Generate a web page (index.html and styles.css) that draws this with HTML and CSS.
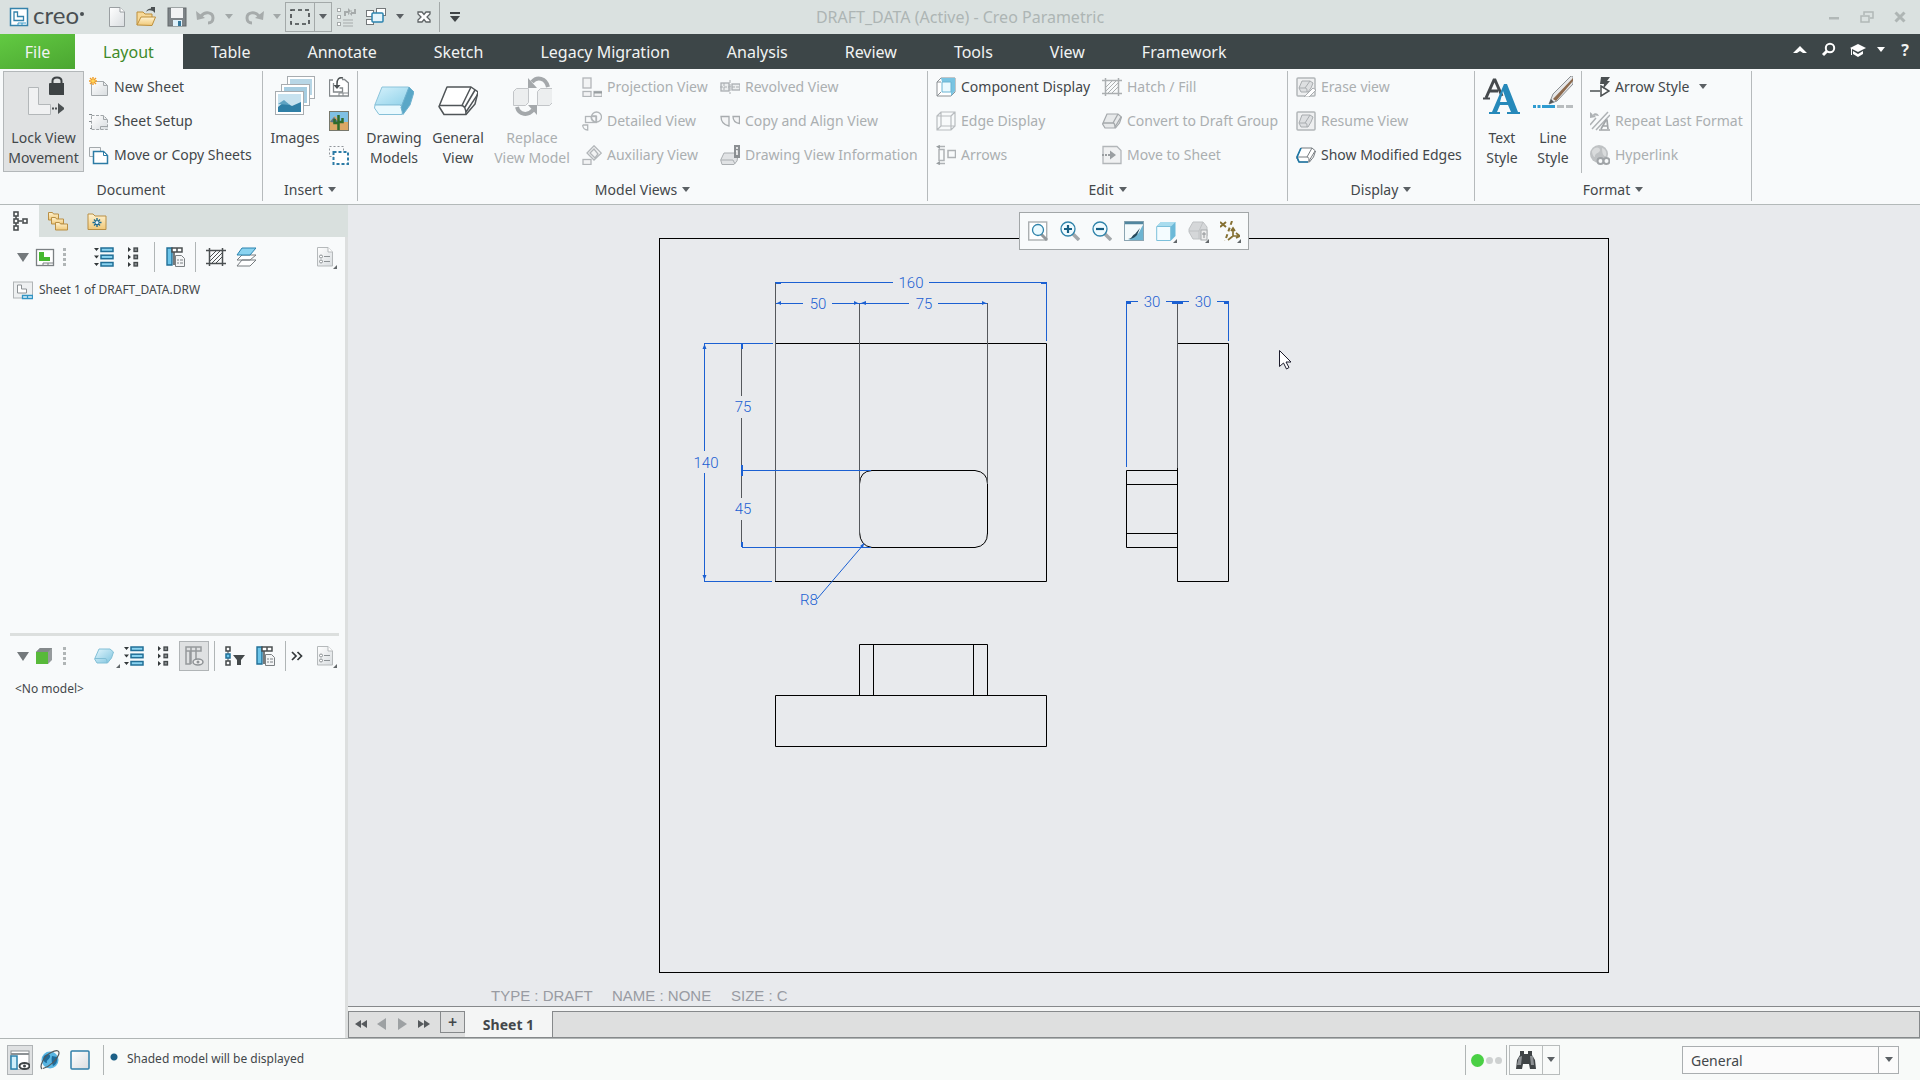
FILE: index.html
```html
<!DOCTYPE html>
<html lang="en">
<head>
<meta charset="utf-8">
<title>DRAFT_DATA (Active) - Creo Parametric</title>
<link rel="stylesheet" href="styles.css">
</head>
<body>
<svg class="defs" aria-hidden="true">
  <defs>
    <linearGradient id="gPage" x1="0" y1="0" x2="1" y2="1"><stop offset="0" stop-color="#fff"/><stop offset="1" stop-color="#d9dde0"/></linearGradient>
    <linearGradient id="gBlue" x1="0" y1="0" x2="1" y2="1"><stop offset="0" stop-color="#e3f6fd"/><stop offset="1" stop-color="#7cc3de"/></linearGradient>
    <linearGradient id="gTop" x1="0" y1="0" x2="1" y2="1"><stop offset="0" stop-color="#d5f1fb"/><stop offset="1" stop-color="#8fd2ea"/></linearGradient>
    <linearGradient id="gFolder" x1="0" y1="0" x2="0" y2="1"><stop offset="0" stop-color="#fff3d2"/><stop offset="1" stop-color="#f0c878"/></linearGradient>
    <symbol id="down" viewBox="0 0 8 6"><path d="M0 0h8L4 5z" fill="#5b6064"/></symbol>
    <symbol id="downL" viewBox="0 0 8 6"><path d="M0 0h8L4 5z" fill="#a2a8a8"/></symbol>
    <symbol id="logo" viewBox="0 0 20 20"><rect x="1.500" y="1.500" width="17" height="17" fill="#fff" stroke="#3583ab" stroke-width="1.500"/><path d="M5 5h3.500v4.500h6v4H5z" fill="none" stroke="#3583ab" stroke-width="1.300"/><path d="M9 18v-2h8M13 16v2" stroke="#3a9bc9" fill="none"/></symbol>
    <symbol id="new" viewBox="0 0 20 20"><path d="M2.500.5H13l4.500 4.500v14.500h-15z" fill="url(#gPage)" stroke="#9a9fa2"/><path d="M13 .5V5h4.500" fill="#fff" stroke="#9a9fa2"/></symbol>
    <symbol id="open" viewBox="0 0 20 20"><path d="M1 18V5h6l2 2h7v3" fill="#f7d998" stroke="#bd8f3c"/><path d="M1 18l4-8h14.500L16 18.500z" fill="url(#gFolder)" stroke="#bd8f3c"/><path d="M10 5c1-3 3-3.500 5-3.500V0l4 0v6L17 4c-3-1-5-1-7 1z" fill="#4b5052"/></symbol>
    <symbol id="save" viewBox="0 0 20 20"><rect x="1" y="1" width="18" height="18" fill="#7e8488" stroke="#63686b"/><rect x="4" y="1" width="12" height="10" fill="#f2f3f4"/><rect x="6" y="13" width="9" height="6" fill="#dff1fa"/><rect x="11" y="14" width="3" height="5" fill="#35789c"/></symbol>
    <symbol id="undo" viewBox="0 0 20 20"><path d="M5 9c4-5 12-4 12 2 0 3-2 5-5 5" fill="none" stroke="#a6abab" stroke-width="3"/><path d="M0 4l1 9 8-2z" fill="#a6abab"/></symbol>
    <symbol id="redo" viewBox="0 0 20 20"><path d="M15 9C11 4 3 5 3 11c0 3 2 5 5 5" fill="none" stroke="#a6abab" stroke-width="3"/><path d="M20 4l-1 9-8-2z" fill="#a6abab"/></symbol>
    <symbol id="selbox" viewBox="0 0 20 20"><rect x="1" y="3" width="18" height="14" fill="none" stroke="#3f4446" stroke-width="1.600" stroke-dasharray="4 3"/></symbol>
    <symbol id="regen" viewBox="0 0 20 20"><g fill="#fff" stroke="#a6abab"><rect x="1.500" y="1.500" width="3" height="3"/><rect x="1.500" y="8.500" width="3" height="3"/><rect x="1.500" y="15.500" width="3" height="3"/></g><path d="M7 13h10M7 16h10M7 19h10" stroke="#a6abab"/><path d="M9 9V5h4M19 2v4h-4" fill="none" stroke="#a6abab" stroke-width="2"/><path d="M12 1l4 4-4 3zM16 3l-3 3 3 3z" fill="#a6abab"/></symbol>
    <symbol id="wins" viewBox="0 0 20 20"><g fill="#fff" stroke="#73787a"><rect x="10.500" y="1.500" width="9" height="7"/><rect x=".5" y="3.500" width="7" height="6"/><rect x=".5" y="12.500" width="7" height="5"/></g><rect x="6" y="6" width="11" height="9" rx="1" fill="#e4f4fb" stroke="#2b83ae" stroke-width="1.500"/></symbol>
    <symbol id="xout" viewBox="0 0 20 20"><path d="M4 5h4l2 2.500L12 5h4v2l-3 3 3 3v2h-4l-2-2.500L8 15H4v-2l3-3-3-3z" fill="#fff" stroke="#5f6466" stroke-width="1.300"/></symbol>
    <symbol id="custom" viewBox="0 0 20 20"><path d="M5 6h10" stroke="#3f4446" stroke-width="2"/><path d="M5 9h10l-5 6z" fill="#3f4446"/></symbol>
    <symbol id="wmin" viewBox="0 0 20 20"><rect x="5" y="10" width="10" height="2.500" fill="#b1b8b7"/></symbol>
    <symbol id="wres" viewBox="0 0 20 20"><path d="M7 8V5h9v6h-3" fill="none" stroke="#b1b8b7" stroke-width="1.500"/><rect x="4" y="9" width="8" height="6" fill="none" stroke="#b1b8b7" stroke-width="1.500"/></symbol>
    <symbol id="wx" viewBox="0 0 20 20"><path d="M5.500 5.500l9 9M14.500 5.500l-9 9" stroke="#aeb5b4" stroke-width="3"/></symbol>
    <symbol id="up" viewBox="0 0 20 20"><path d="M3 13l7-7 7 7h-4l-3-2-3 2z" fill="#fff"/></symbol>
    <symbol id="search" viewBox="0 0 20 20"><circle cx="11" cy="8" r="4.200" fill="none" stroke="#fff" stroke-width="2"/><path d="M8 11l-4 4" stroke="#fff" stroke-width="3"/></symbol>
    <symbol id="hat" viewBox="0 0 20 20"><path d="M2 8l8-4 8 4-8 4z" fill="#fff"/><path d="M5 11v3l5 3 5-3v-3l-5 3z" fill="#fff"/><path d="M3.500 8v7" stroke="#fff"/></symbol>
    <symbol id="downW" viewBox="0 0 8 6"><path d="M0 0h8L4 5z" fill="#fff"/></symbol>
    <symbol id="lock" viewBox="0 0 40 40"><path d="M4.500 11.500h10v17h12v10h-22z" fill="#f0f1f2" stroke="#b3b7b9"/><rect x="25" y="7" width="16" height="12" rx="1" fill="#3e4345"/><path d="M28.500 8V5q0-3.500 4.500-3.500T37.500 5v3" fill="none" stroke="#3e4345" stroke-width="2"/><path d="M28 32.500h8" stroke="#4c5153" stroke-width="2" stroke-dasharray="2 1"/><path d="M34 27l7 5.500-7 5.500z" fill="#4c5153"/></symbol>
    <symbol id="nsheet" viewBox="0 0 20 20"><path d="M2.500 4.500h12l4 4v10h-16z" fill="url(#gPage)" stroke="#a4a9ac"/><path d="M14.500 4.500v4h4" fill="none" stroke="#a4a9ac"/><path d="M4 0v8M0 4h8M1 1l6 6M7 1L1 7" stroke="#ef9a22" stroke-width="1.400"/><circle cx="4" cy="4" r="1.800" fill="#ffd75a"/></symbol>
    <symbol id="ssetup" viewBox="0 0 20 20"><path d="M2.500 4.500h12l4 4v10h-16z" fill="url(#gPage)" stroke="#a0a5a8" stroke-dasharray="3 1.500"/><path d="M14.500 4.500v4h4M11.500 18.500v-3h7" fill="none" stroke="#a0a5a8"/><path d="M0 3.500h3M0 10.500h2M1 17.500h2" stroke="#888d90"/></symbol>
    <symbol id="mcopy" viewBox="0 0 20 20"><path d="M.5 2.500h11v9h-11z" fill="#f5f6f7" stroke="#a4a9ac"/><path d="M4.500 6.500h10l4 4v8h-14z" fill="#fff" stroke="#2c7ba5" stroke-width="1.500"/><path d="M14.500 6.500v4h4z" fill="#fff" stroke="#2c7ba5"/></symbol>
    <symbol id="images" viewBox="0 0 40 40"><g stroke="#a7acb0"><rect x="12.500" y=".5" width="27" height="22" fill="#fff"/><path d="M15 3h22v16H15z" fill="#b7d6e6" stroke="none"/><rect x="6.500" y="8.500" width="28" height="21" fill="#fff"/><path d="M9 11h23v16H9z" fill="#a5cce0" stroke="none"/><rect x=".5" y="15.500" width="28" height="23" fill="#fff"/></g><rect x="3" y="18" width="23" height="18" fill="#c7e2ef"/><path d="M3 31l6-5 8 4 9-4v10H3z" fill="#2f7fa6"/><path d="M3 28l6-4 6 5z" fill="#5fa3c2"/></symbol>
    <symbol id="imp" viewBox="0 0 20 20"><path d="M4 3H.5v16H19.500V6l-4-3.500H13" fill="#fff" stroke="#83888b" stroke-width="1.300"/><path d="M4.500 6v9h9v-4h-3" fill="none" stroke="#83888b" stroke-width="1.300"/><path d="M14 1c-4-1-6 1-6 6v2" fill="none" stroke="#4b5052" stroke-width="1.500"/><path d="M4.500 8h7L8 12z" fill="#4b5052"/><path d="M10 19v-3h9M14 16v3" fill="none" stroke="#83888b"/></symbol>
    <symbol id="cactus" viewBox="0 0 20 20"><rect x=".5" y=".5" width="19" height="19" fill="#7fc0e4" stroke="#77786c"/><path d="M1 10l5-5 5 6h8v8H1z" fill="#dba765"/><path d="M1 11l4-5 5 6z" fill="#54748b"/><path d="M9.500 19V4M5.500 8v4h4M13.500 7v4h-4" stroke="#2f6b2b" stroke-width="2.500" fill="none"/></symbol>
    <symbol id="overlay" viewBox="0 0 20 20"><rect x=".5" y="1.500" width="14" height="10" fill="none" stroke="#90959a" stroke-dasharray="2 2"/><rect x="4.500" y="7" width="14.500" height="12" fill="#fff" stroke="#2c7ba5" stroke-width="2" stroke-dasharray="3 2"/></symbol>
    <symbol id="dmodel" viewBox="0 0 40 40"><path d="M8 11h26q2 0 1 2L28 29H.800z" fill="url(#gTop)" stroke="#8cc4da"/><path d="M1 29h25l3 3-1 6.500H5L.5 32z" fill="#e9f9fe" stroke="#86c0d8"/><path d="M35 11l5 5-4 13-7 9.500-2-7z" fill="#5aa7c7" stroke="#6fb2cf"/></symbol>
    <symbol id="gview" viewBox="0 0 40 40"><g fill="#fff" stroke="#505558" stroke-width="1.500" stroke-linejoin="round"><path d="M9 11h24l7 5-3 12-9 10.500H6l-5-8z"/><path d="M1 29.500h22c4 0 5 4 5 9M33 11l-9 18.500M37 14L27 31M40 18L28 36" fill="none"/></g></symbol>
    <symbol id="replace" viewBox="0 0 40 40"><g fill="#eceeef" stroke="#c2c5c8"><path d="M1.500 15.500l3-3h12v14l-3 3h-12z"/><path d="M25.500 15.500l3-3h12v14l-3 3h-12z"/></g><g fill="none" stroke="#a4a8ab" stroke-width="4"><path d="M36 11C34 2 25 0 20 6"/><path d="M5 31c2 8 11 9 16 3"/></g><path d="M16 2v10h9zM16 29h9v10z" fill="#a4a8ab"/></symbol>
    <symbol id="proj" viewBox="0 0 20 20"><g fill="#f2f3f4" stroke="#b2b6b9" stroke-width="1.300"><rect x="1" y="1" width="8" height="10"/><rect x="1" y="14.500" width="8" height="5"/><rect x="12" y="14.500" width="8" height="5"/></g><path d="M12 15.500h8" stroke="#999ea1" stroke-width="2"/></symbol>
    <symbol id="detail" viewBox="0 0 20 20"><g fill="none" stroke="#b2b6b9" stroke-width="1.300"><rect x="3.500" y="5.500" width="11" height="6"/><circle cx="14.500" cy="6" r="5"/><path d="M9 5h5v6c-3 0-5-2-5-6M.7 14h5v5c-3 0-5-2-5-5"/></g></symbol>
    <symbol id="aux" viewBox="0 0 20 20"><g fill="#f2f3f4" stroke="#b2b6b9" stroke-width="1.300"><path d="M12 .800l7.300 7.300L12 15 5 8z"/><path d="M8 8l5 5 3-4-4-5z"/><rect x="1" y="14.500" width="8" height="5"/></g></symbol>
    <symbol id="revolv" viewBox="0 0 20 20"><g fill="#eceeef" stroke="#aaaeb1" stroke-width="1.300"><rect x="1" y="6" width="8" height="8"/><rect x="12" y="7" width="8" height="6"/></g><path d="M0 10h20M4 6v8M10 3v14" stroke="#aaaeb1" stroke-dasharray="3 1"/></symbol>
    <symbol id="calign" viewBox="0 0 20 20"><path d="M1 5.500h8v9.500C4 14 1 11 1 5.500zM13 5.500h6.500v7C16 12 13 10 13 5.500z" fill="#f4f5f6" stroke="#a8acaf" stroke-width="1.300"/></symbol>
    <symbol id="dvi" viewBox="0 0 20 20"><path d="M4 8h12l2 2-1 6-3 3.500H2L.700 15z" fill="#e1e3e5" stroke="#aaaeb1"/><path d="M1 15h12l2 4" fill="none" stroke="#aaaeb1"/><rect x="14" y="0" width="6" height="13" fill="#8b8f92"/><path d="M17 2v2M16 6h1v4" stroke="#fff" stroke-width="1.500" fill="none"/></symbol>
    <symbol id="cdisp" viewBox="0 0 20 20"><path d="M1 5l4-4h14v14l-4 4H1z" fill="#fff" stroke="#8b9094"/><path d="M5 1h14v13l-4 5V5H6z" fill="#79c4e2"/><path d="M6 5h9v10H6z" fill="#eafaff" stroke="#6ab4d3"/><path d="M1 5h4M5 15l-4 4" stroke="#8b9094"/></symbol>
    <symbol id="edisp" viewBox="0 0 20 20"><path d="M1 5l4-4h14v14l-4 4H1zM5 1v14l-4 4M15 5l4-4M1 5h14v14M5 15h14" fill="none" stroke="#b8bcbf" stroke-width="1.200"/></symbol>
    <symbol id="arrows" viewBox="0 0 20 20"><g fill="none" stroke="#aeb2b5" stroke-width="1.500"><rect x="3" y="4.500" width="5" height="11"/><rect x="12" y="5.500" width="7.500" height="7"/><path d="M2 1.500h7M2 18.500h7"/></g><path d="M0 1.500L4 0v4zM0 18.500L4 16v4z" fill="#999ea1"/></symbol>
    <symbol id="hatch" viewBox="0 0 20 20"><path d="M3.500 1v18M16.500 1v18M0 3.500h20M0 16.500h20" stroke="currentColor" stroke-width="1.500"/><path d="M4 10l6-6M4 14L14 4M6 16L16 6M10 16l6-6" stroke="currentColor"/></symbol>
    <symbol id="cube" viewBox="0 0 20 20"><path d="M5 3h11l3.500 3-2 6-4 5H3L.600 13z" fill="#e7e9ea" stroke="#a4a8ab" stroke-width="1.200"/><path d="M1 12h10c2 0 2 2 2 5M16 3l-5 9M19 6l-6 10" fill="none" stroke="#a4a8ab" stroke-width="1.300"/></symbol>
    <symbol id="msheet" viewBox="0 0 20 20"><path d="M1 1.500h14l4 4v13H1z" fill="#f0f1f2" stroke="#b2b6b9" stroke-width="1.300"/><path d="M0 10h9" stroke="#9a9ea1" stroke-width="2" stroke-dasharray="2 1"/><path d="M8 5.500l6 4.500-6 4.500z" fill="#9a9ea1"/></symbol>
    <symbol id="erase" viewBox="0 0 20 20"><rect x="1" y="1" width="18" height="18" rx="1" fill="#eff0f1" stroke="#b2b6b9" stroke-width="1.500"/><path d="M6 4h8l3 2-2 5-3 4H5l-2-4z" fill="#dddfe1" stroke="#a8acaf"/><path d="M3 11h6c2 0 2 1 2 4M14 4l-5 7" fill="none" stroke="#a8acaf"/><path d="M8 20l9-9 3 2-7 7z" fill="#fff" stroke="#a8acaf"/></symbol>
    <symbol id="resume" viewBox="0 0 20 20"><rect x="1" y="1" width="18" height="18" rx="1" fill="#eff0f1" stroke="#b2b6b9" stroke-width="1.500"/><path d="M6 4h8l3 2-2 5-3 5H5l-2-4z" fill="#dddfe1" stroke="#a8acaf"/><path d="M3 12h6c2 0 2 1 2 4M14 4l-5 8" fill="none" stroke="#a8acaf"/></symbol>
    <symbol id="medges" viewBox="0 0 20 20"><path d="M5 3h11l3.500 3-2 6-4 5H3L.600 13z" fill="#fff" stroke="#777c80"/><path d="M1 12h10c2 0 2 2 2 5M16 3l-5 9M19 6l-6 10" fill="none" stroke="#777c80"/><path d="M5 3L1 12l2 5h9" fill="none" stroke="#1f78a6" stroke-width="1.700"/></symbol>
    <symbol id="tstyle" viewBox="0 0 40 40"><path d="M4 22L12 4h1l7 16M7 15h9" fill="none" stroke="#45494c" stroke-width="3"/><path d="M1 22.500h7" stroke="#45494c" stroke-width="2"/><path d="M22 8h3l11 28h2v2H25v-2h4l-3-7h-8l-3 7h3v2H7v-2h3zm-1 7l-3 11h7z" fill="#2689ba"/></symbol>
    <symbol id="lstyle" viewBox="0 0 40 40"><path d="M0 30.500h22" stroke="#2e9bd0" stroke-width="3" stroke-dasharray="3 1.500 3 1.500 14 3"/><path d="M24 30.500h16" stroke="#b9bdbf" stroke-width="3" stroke-dasharray="7 2"/><path d="M16 28l4-10L38 0h2v8L24 25z" fill="#e6e7e9" stroke="#8a8f92"/><path d="M40 5L23 25l-3-2L40 2z" fill="#8c6a4e"/><path d="M16 28l2-5 3 3z" fill="#555"/></symbol>
    <symbol id="astyle" viewBox="0 0 20 20"><path d="M0 14h10" stroke="#4b5052" stroke-width="1.500"/><path d="M11 9l8 5-8 5zM11 19V9" fill="#fff" stroke="#4b5052" stroke-width="1.500"/><path d="M11 0h9l-3 4h3l-7 8 1-5h-4z" fill="#4b5052"/></symbol>
    <symbol id="rformat" viewBox="0 0 20 20"><path d="M2 18L18 1M6 19L20 4M0 14l6-7" stroke="#aeb2b5" stroke-width="1.500"/><path d="M0 1v6l6-1zM2 4c3-3 6-2 7 1" fill="#aeb2b5"/><path d="M9 19h11M11 18l5-9h1l1 9M13 15h5" fill="none" stroke="#a1a5a8" stroke-width="1.700"/></symbol>
    <symbol id="hyper" viewBox="0 0 20 20"><circle cx="9" cy="9" r="9" fill="#bfc2c4"/><path d="M2 6c3-5 8-4 8-1s-5 3-5 6-3-1-3-5M12 3c4 1 5 5 4 8-3 1-4-4-4-8" fill="#d9dbdc"/><g fill="#f8fafb" stroke="#a0a4a7" stroke-width="2"><circle cx="10.500" cy="16" r="3"/><circle cx="16.500" cy="16" r="3"/></g></symbol>
    <symbol id="mtree" viewBox="0 0 20 20"><g fill="#fff" stroke="#4b5052" stroke-width="1.600"><path d="M6 4v13M6 10h6"/><rect x="4" y="1" width="4" height="4"/><rect x="4" y="8" width="4" height="4"/><rect x="4" y="15" width="4" height="4"/><rect x="13" y="8" width="4" height="4"/></g></symbol>
    <symbol id="folders" viewBox="0 0 20 20"><g fill="url(#gFolder)" stroke="#b98f45"><path d="M.5 9V1.500h4l1 1.500h5v6z"/><path d="M3.500 13V6.500h4l1 1.500h7v5z"/><path d="M7.500 19v-7.500h4l1 1.500h7v6z"/></g></symbol>
    <symbol id="fav" viewBox="0 0 20 20"><path d="M1 18.500V3h5l2 2h11v13.500z" fill="url(#gFolder)" stroke="#b98f45"/><path d="M10 7v9M5.500 11.500h9M7 8.500l6 6M13 8.500l-6 6" stroke="#1d6b91" stroke-width="1.400"/><circle cx="10" cy="11.500" r="1.500" fill="#e9f7ff"/></symbol>
    <symbol id="tri" viewBox="0 0 12 9"><path d="M0 0h12L6 9z" fill="#74797c"/></symbol>
    <symbol id="drw" viewBox="0 0 20 20"><rect x="1.500" y="2.500" width="17" height="16" fill="#fff" stroke="#7b8083" stroke-width="1.300"/><path d="M4 5h5v5h6v4H4z" fill="#46b82f"/><path d="M8 18v-2h10M13 16v3" stroke="#7b8083" fill="none"/></symbol>
    <symbol id="dots" viewBox="0 0 4 20"><g fill="#b0b5b6"><rect x="1" y="1" width="3" height="3"/><rect x="1" y="6" width="3" height="3"/><rect x="1" y="11" width="3" height="3"/><rect x="1" y="16" width="3" height="3"/></g></symbol>
    <symbol id="expand" viewBox="0 0 20 20"><path d="M0 1h5L2.500 4zM0 8.500h5l-2.500 3zM0 16h5l-2.500 3z" fill="#33383a"/><g fill="#8ad3f0" stroke="#216f97" stroke-width="1.500"><rect x="7" y="1" width="12" height="3.500"/><rect x="7" y="8.200" width="12" height="3.500"/><rect x="7" y="15.500" width="12" height="3.500"/></g></symbol>
    <symbol id="collapse" viewBox="0 0 20 20"><path d="M4 0v5l3-2.500zM4 7.500v5L7 10zM4 15v5l3-2.500z" fill="#33383a"/><g fill="#8b9093" stroke="#44494b" stroke-width="1.300"><rect x="10" y="1" width="3.500" height="3.500"/><rect x="10" y="8.200" width="3.500" height="3.500"/><rect x="10" y="15.500" width="3.500" height="3.500"/></g></symbol>
    <symbol id="cols" viewBox="0 0 20 20"><path d="M2 1h5v17H2z" fill="#6cc5ea" stroke="#216f97" stroke-width="1.400"/><path d="M7 1h10v4H7zM12 1v4M9 5v13" fill="#fff" stroke="#4b5052" stroke-width="1.500"/><path d="M10.500 8.500h6l3 3v8h-9z" fill="#f4f5f6" stroke="#7b8083"/><path d="M12 13h2M15 13h3M12 16h2M15 16h3" stroke="#7b8083"/></symbol>
    <symbol id="layers" viewBox="0 0 20 20"><path d="M1 19l5-6h14l-6 6zM1 13l5-5h14l-6 5z" fill="#fff" stroke="#777c80"/><path d="M1 8l5-7h14l-6 7z" fill="#8ad3f0" stroke="#2b83ae"/></symbol>
    <symbol id="props" viewBox="0 0 20 20"><path d="M1.500.5H12l4.500 4.500v14h-15z" fill="url(#gPage)" stroke="#b5b9bb"/><path d="M12 .5V5h4.500" fill="#fff" stroke="#b5b9bb"/><path d="M8 9.500h6M8 14.500h6" stroke="#8d9295"/><g fill="#fff" stroke="#8d9295"><circle cx="5" cy="9.500" r="1.500"/><circle cx="5" cy="14.500" r="1.500"/></g></symbol>
    <symbol id="sheet" viewBox="0 0 20 20"><rect x=".5" y="2" width="19" height="16" fill="#eef0f1" stroke="#b0b4b6"/><path d="M4.500 5h4v4h5v4h-9z" fill="#fff" stroke="#8c9194"/><path d="M9.500 15.500h10v3h-10zM14.500 15.500v3" fill="#e2f5fd" stroke="#3194c4" stroke-width="1.300"/></symbol>
    <symbol id="gcube" viewBox="0 0 20 20"><path d="M1 6l4-4h12v12l-4 4" fill="#969b9d"/><path d="M1 6l4-4h12l-4 4z" fill="#84898b"/><rect x="1" y="6" width="12" height="12" fill="#58b93a"/></symbol>
    <symbol id="bcube" viewBox="0 0 20 20"><path d="M5 3h11l3.500 3-2 6-4 5H3L.600 13z" fill="url(#gBlue)" stroke="#82bfd6"/><path d="M1 12.500h10c2 0 2 2 2 4.500" fill="none" stroke="#82bfd6"/></symbol>
    <symbol id="eyecols" viewBox="0 0 20 20"><path d="M2 1h15v4H2zM2 5v13h4V5M7 1v17M12 1v12" fill="none" stroke="#96999c" stroke-width="1.500"/><ellipse cx="14" cy="16" rx="5" ry="3" fill="#eee" stroke="#8f9396" stroke-width="1.500"/><circle cx="14" cy="16" r="1.500" fill="#8f9396"/></symbol>
    <symbol id="filter" viewBox="0 0 20 20"><path d="M3 3v14" stroke="#4b5052"/><g fill="#fff" stroke="#44494b" stroke-width="1.500"><rect x="1" y="1" width="4" height="4"/><rect x="1" y="15" width="4" height="4"/><rect x="1" y="8" width="4" height="4" fill="#6cc5ea" stroke="#216f97"/></g><path d="M8 9h12l-4 5v5h-4v-5z" fill="#44494b"/></symbol>
    <symbol id="more" viewBox="0 0 20 20"><path d="M6 6l4 4-4 4M11.500 6l4 4-4 4" fill="none" stroke="#33383a" stroke-width="1.700"/></symbol>
    <symbol id="first" viewBox="0 0 20 20"><path d="M3 10l6-4v8zM9 10l6-4v8z" fill="#55595c"/></symbol>
    <symbol id="prev" viewBox="0 0 20 20"><path d="M5 10l9-6v12z" fill="#9da1a3"/></symbol>
    <symbol id="next" viewBox="0 0 20 20"><path d="M15 10L6 4v12z" fill="#9da1a3"/></symbol>
    <symbol id="last" viewBox="0 0 20 20"><path d="M18 10l-6-4v8zM12 10L6 6v8z" fill="#55595c"/></symbol>
    <symbol id="nav" viewBox="0 0 20 20"><rect x="1" y="1" width="18" height="18" fill="#fff" stroke="#8c9194"/><path d="M1 4h18" stroke="#8c9194" stroke-width="2"/><rect x="1" y="6" width="6" height="13" fill="#cfeefa" stroke="#2b83ae" stroke-width="1.500"/><path d="M8 15q6-5 12 0v4H8z" fill="#fff"/><ellipse cx="14.500" cy="16" rx="5" ry="3" fill="#fff" stroke="#3f4446" stroke-width="2"/><circle cx="14.500" cy="16" r="1.500" fill="#3f4446"/></symbol>
    <symbol id="globe" viewBox="0 0 20 20"><circle cx="10" cy="10" r="8.500" fill="#58b5e2"/><path d="M4 6c3-3 7-2 6 1s-4 3-3 6c-3 0-5-4-3-7M12 6l5 1c1 4-1 8-4 9-1-3-2-6-1-10" fill="#1e6c9c"/><path d="M2 19C-1 16 4 6 11 2.500s9-1.500 7.500 2.500S11 16 3 18.500" fill="none" stroke="#555a5d" stroke-width="1.200"/></symbol>
    <symbol id="blank" viewBox="0 0 20 20"><rect x="1" y="1" width="18" height="18" rx="1" fill="url(#gPage)" stroke="#2f7fa9" stroke-width="1.500"/></symbol>
    <symbol id="binoc" viewBox="0 0 20 20"><path d="M4 1h4v3h4V1h4v4l3 5 1 9h-6l-1-5H7l-1 5H0l1-9 3-5z" fill="#3f4446"/><path d="M3 7l3-1-1 9H1zM14 6h3l1 9h-3z" fill="#8d9194"/></symbol>
    <symbol id="zfit" viewBox="0 0 20 20"><rect x=".700" y="1" width="18" height="18" fill="#fff" stroke="#abafb1" stroke-width="1.400"/><path d="M13 13l6 6" stroke="#93989b" stroke-width="3"/><circle cx="10" cy="9" r="5.500" fill="#eafaff" stroke="#2f83aa" stroke-width="1.300"/></symbol>
    <symbol id="zin" viewBox="0 0 20 20"><path d="M12 12l7 7" stroke="#a3a8ab" stroke-width="3.500"/><circle cx="8" cy="8" r="7" fill="#f0fbff" stroke="#2f83aa" stroke-width="1.300"/><path d="M8 4v8M4 8h8" stroke="#175f84" stroke-width="2.200"/></symbol>
    <symbol id="zout" viewBox="0 0 20 20"><path d="M12 12l7 7" stroke="#a3a8ab" stroke-width="3.500"/><circle cx="8" cy="8" r="7" fill="#f0fbff" stroke="#2f83aa" stroke-width="1.300"/><path d="M4 8h8" stroke="#175f84" stroke-width="2.200"/></symbol>
    <symbol id="repaint" viewBox="0 0 20 20"><rect x=".5" y=".5" width="19" height="19" fill="#f4fafc" stroke="#8ba5b2"/><path d="M19 4v15H4c4-1 5-4 8-5s4-5 7-10z" fill="#6db4d1"/><path d="M1 2h18" stroke="#50869f" stroke-width="2.500"/><path d="M4 18c4 0 4-4 7-5l5-6-3 7c-2 2-4 4-9 4z" fill="#24495c"/></symbol>
    <symbol id="shade" viewBox="0 0 20 20"><path d="M1 5l4-4h14.500v14l-4 4H1z" fill="#6cb9d8"/><path d="M1 5l4-4h14.500l-4 4z" fill="#a9dcee"/><path d="M.700 5.500h14v14h-14z" fill="#f4fcff" stroke="#7cc0da"/></symbol>
    <symbol id="saved" viewBox="0 0 20 20"><path d="M1 8l4-7h10l4 5v9l-5 3H5l-4-7z" fill="#d5d7d9" stroke="#bfc2c4"/><path d="M1 10h10l4-9M11 10v8" fill="none" stroke="#bfc2c4"/><rect x="13" y="9" width="6" height="10" fill="#eee" stroke="#a7abae"/><path d="M15 12h2v2h-2zM15 16h2" stroke="#8f9396" fill="none"/></symbol>
    <symbol id="datum" viewBox="0 0 20 20"><path d="M0 1l6 5M6 1L0 6" stroke="#857033" stroke-width="2"/><path d="M12 0L5 20" stroke="#857033" stroke-width="2" stroke-dasharray="4 3"/><path d="M13 8v7h6M13 15l-5 4M16 12l4 3-4 2M11 10l2-3 2 3" fill="none" stroke="#857033" stroke-width="1.700"/></symbol>
  </defs>
</svg>

<header class="titlebar">
  <div class="quick">
    <div class="brand"><svg class="i"><use href="#logo"/></svg><span>creo</span><i class="brand-dot"></i></div>
    <button aria-label="New"><svg class="i"><use href="#new"/></svg></button>
    <button aria-label="Open"><svg class="i"><use href="#open"/></svg></button>
    <button aria-label="Save"><svg class="i"><use href="#save"/></svg></button>
    <button aria-label="Undo"><svg class="i"><use href="#undo"/></svg></button>
    <button aria-label="Undo list"><svg class="caret"><use href="#downL"/></svg></button>
    <button aria-label="Redo"><svg class="i"><use href="#redo"/></svg></button>
    <button aria-label="Redo list"><svg class="caret"><use href="#downL"/></svg></button>
    <div class="split"><button aria-label="Select"><svg class="i"><use href="#selbox"/></svg></button><button aria-label="Select options"><svg class="caret"><use href="#down"/></svg></button></div>
    <button aria-label="Regenerate"><svg class="i"><use href="#regen"/></svg></button>
    <button aria-label="Windows"><svg class="i"><use href="#wins"/></svg></button>
    <button aria-label="Window list"><svg class="caret"><use href="#down"/></svg></button>
    <button aria-label="Close window"><svg class="i"><use href="#xout"/></svg></button>
    <button class="customize" aria-label="Customize toolbar"><svg class="i"><use href="#custom"/></svg></button>
  </div>
  <h1>DRAFT_DATA (Active) - Creo Parametric</h1>
  <div class="winbtns">
    <button aria-label="Minimize"><svg class="i"><use href="#wmin"/></svg></button>
    <button aria-label="Restore"><svg class="i"><use href="#wres"/></svg></button>
    <button aria-label="Close"><svg class="i"><use href="#wx"/></svg></button>
  </div>
</header>

<nav class="tabs">
  <button class="tab file">File</button><button class="tab active">Layout</button><button class="tab">Table</button><button class="tab">Annotate</button><button class="tab">Sketch</button><button class="tab">Legacy Migration</button><button class="tab">Analysis</button><button class="tab">Review</button><button class="tab">Tools</button><button class="tab">View</button><button class="tab">Framework</button>
  <div class="tabtools">
    <button aria-label="Minimize ribbon"><svg class="i"><use href="#up"/></svg></button>
    <button aria-label="Search"><svg class="i"><use href="#search"/></svg></button>
    <button aria-label="Learning"><svg class="i"><use href="#hat"/></svg></button>
    <button class="narrow" aria-label="Learning menu"><svg class="caret"><use href="#downW"/></svg></button>
    <button class="help" aria-label="Help">?</button>
  </div>
</nav>

<section class="ribbon">
  <div class="group g-doc">
    <div class="body">
      <button class="big on"><svg class="b"><use href="#lock"/></svg><span>Lock View<br>Movement</span></button>
      <div class="col">
        <button><svg class="i"><use href="#nsheet"/></svg>New Sheet</button>
        <button><svg class="i"><use href="#ssetup"/></svg>Sheet Setup</button>
        <button><svg class="i"><use href="#mcopy"/></svg>Move or Copy Sheets</button>
      </div>
    </div>
    <div class="caption">Document</div>
  </div>
  <div class="group g-ins">
    <div class="body">
      <button class="big"><svg class="b"><use href="#images"/></svg><span>Images</span></button>
      <div class="col">
        <button aria-label="Import drawing"><svg class="i"><use href="#imp"/></svg></button>
        <button aria-label="Insert picture"><svg class="i"><use href="#cactus"/></svg></button>
        <button aria-label="Overlay"><svg class="i"><use href="#overlay"/></svg></button>
      </div>
    </div>
    <button class="caption">Insert<svg class="caret"><use href="#down"/></svg></button>
  </div>
  <div class="group g-mod">
    <div class="body">
      <button class="big"><svg class="b"><use href="#dmodel"/></svg><span>Drawing<br>Models</span></button>
      <button class="big"><svg class="b"><use href="#gview"/></svg><span>General<br>View</span></button>
      <button class="big" disabled><svg class="b"><use href="#replace"/></svg><span>Replace<br>View Model</span></button>
      <div class="col">
        <button disabled><svg class="i"><use href="#proj"/></svg>Projection View</button>
        <button disabled><svg class="i"><use href="#detail"/></svg>Detailed View</button>
        <button disabled><svg class="i"><use href="#aux"/></svg>Auxiliary View</button>
      </div>
      <div class="col">
        <button disabled><svg class="i"><use href="#revolv"/></svg>Revolved View</button>
        <button disabled><svg class="i"><use href="#calign"/></svg>Copy and Align View</button>
        <button disabled><svg class="i"><use href="#dvi"/></svg>Drawing View Information</button>
      </div>
    </div>
    <button class="caption">Model Views<svg class="caret"><use href="#down"/></svg></button>
  </div>
  <div class="group g-edit">
    <div class="body">
      <div class="col">
        <button><svg class="i"><use href="#cdisp"/></svg>Component Display</button>
        <button disabled><svg class="i"><use href="#edisp"/></svg>Edge Display</button>
        <button disabled><svg class="i"><use href="#arrows"/></svg>Arrows</button>
      </div>
      <div class="col">
        <button disabled><svg class="i"><use href="#hatch"/></svg>Hatch / Fill</button>
        <button disabled><svg class="i"><use href="#cube"/></svg>Convert to Draft Group</button>
        <button disabled><svg class="i"><use href="#msheet"/></svg>Move to Sheet</button>
      </div>
    </div>
    <button class="caption">Edit<svg class="caret"><use href="#down"/></svg></button>
  </div>
  <div class="group g-disp">
    <div class="body">
      <div class="col">
        <button disabled><svg class="i"><use href="#erase"/></svg>Erase view</button>
        <button disabled><svg class="i"><use href="#resume"/></svg>Resume View</button>
        <button><svg class="i"><use href="#medges"/></svg>Show Modified Edges</button>
      </div>
    </div>
    <button class="caption">Display<svg class="caret"><use href="#down"/></svg></button>
  </div>
  <div class="group g-form">
    <div class="body">
      <button class="big"><svg class="b"><use href="#tstyle"/></svg><span>Text<br>Style</span></button>
      <button class="big"><svg class="b"><use href="#lstyle"/></svg><span>Line<br>Style</span></button>
      <div class="col ruled">
        <button><svg class="i"><use href="#astyle"/></svg>Arrow Style<svg class="caret"><use href="#down"/></svg></button>
        <button disabled><svg class="i"><use href="#rformat"/></svg>Repeat Last Format</button>
        <button disabled><svg class="i"><use href="#hyper"/></svg>Hyperlink</button>
      </div>
    </div>
    <button class="caption">Format<svg class="caret"><use href="#down"/></svg></button>
  </div>
</section>

<main class="work">
  <aside class="side">
    <div class="sidetabs">
      <button class="on" aria-label="Model tree"><svg class="i"><use href="#mtree"/></svg></button>
      <button aria-label="Folders"><svg class="i"><use href="#folders"/></svg></button>
      <button aria-label="Favorites"><svg class="i"><use href="#fav"/></svg></button>
    </div>
    <section class="pane">
      <div class="tools">
        <button class="w24" aria-label="Collapse drawing tree"><svg class="tri"><use href="#tri"/></svg></button>
        <button class="w20" aria-label="Drawing"><svg class="i"><use href="#drw"/></svg></button>
        <svg class="dots"><use href="#dots"/></svg>
        <button class="push w30" aria-label="Expand all"><svg class="i"><use href="#expand"/></svg></button>
        <button class="w30" aria-label="Collapse all"><svg class="i"><use href="#collapse"/></svg></button>
        <i class="rule"></i>
        <button class="w40" aria-label="Tree columns"><svg class="i"><use href="#cols"/></svg></button>
        <i class="rule flush"></i>
        <button class="w40 dark" aria-label="Hatch"><svg class="i"><use href="#hatch"/></svg></button>
        <button class="w20" aria-label="Layers"><svg class="i"><use href="#layers"/></svg></button>
        <button class="end drop" aria-label="Tree settings"><svg class="i"><use href="#props"/></svg></button>
      </div>
      <div class="node"><svg class="i"><use href="#sheet"/></svg>Sheet 1 of DRAFT_DATA.DRW</div>
    </section>
    <hr>
    <section class="pane">
      <div class="tools">
        <button class="w24" aria-label="Collapse model tree"><svg class="tri"><use href="#tri"/></svg></button>
        <button class="w20" aria-label="Model"><svg class="i"><use href="#gcube"/></svg></button>
        <svg class="dots"><use href="#dots"/></svg>
        <button class="push w30 drop" aria-label="Active model"><svg class="i"><use href="#bcube"/></svg></button>
        <button class="w30" aria-label="Expand all"><svg class="i"><use href="#expand"/></svg></button>
        <button class="w30" aria-label="Collapse all"><svg class="i"><use href="#collapse"/></svg></button>
        <button class="w30 boxed" aria-label="Show columns"><svg class="i"><use href="#eyecols"/></svg></button>
        <i class="rule"></i>
        <button class="w40" aria-label="Tree filters"><svg class="i"><use href="#filter"/></svg></button>
        <button class="w20" aria-label="Tree columns"><svg class="i"><use href="#cols"/></svg></button>
        <i class="rule wide"></i>
        <button class="w20" aria-label="More"><svg class="i"><use href="#more"/></svg></button>
        <button class="end drop" aria-label="Tree settings"><svg class="i"><use href="#props"/></svg></button>
      </div>
      <div class="node bare">&lt;No model&gt;</div>
    </section>
  </aside>

  <div class="stage">
    <div class="canvas">
      <svg class="drawing" viewBox="348 205 1572 801" role="img" aria-label="Drawing sheet">
        <g class="ln">
          <rect x="659.5" y="238.5" width="949" height="734"/>
          <path d="M775 343.500H1046.500V581.500H775"/>
          <path d="M859.500 532V484M987.500 483V534M872 470.500H975Q987.500 472 987.500 484M859.500 484Q860 471 872 470.500M859.500 532Q860 546 872 547.500H975Q987.500 546 987.500 533"/>
          <path d="M1177.500 343.500H1228.500V581.500H1177.500zM1177.500 470.500H1126.500V547.500H1177.500M1126.500 484.500H1177M1126.500 533.500H1177"/>
          <path d="M775.500 695.500H1046.500V746.500H775.500zM859.500 695V644.500H987.500V695M873.500 645V695M973.500 645V695"/>
        </g>
        <path class="ext" d="M775.500 282V581M859.500 303V534M987.500 303V484M741.500 344V396M741.500 418V498M741.500 520V547M1177.500 302V468"/>
        <g class="dim">
          <path d="M775 282.500H893M929 282.500H1047M1046.500 283V341M776 303.500H803M832 303.500H909M938 303.500H987"/>
          <path d="M704 343.500H773M704.500 344V451M704.500 473V581M704 581.500H772M742 470.500H871M742 547.500H871M864 544L817 599"/>
          <path d="M1126 301.500H1138M1166 301.500H1189M1217 301.500H1229M1126.500 302V467M1228.500 302V341"/>
          <path class="tip" d="M776 282v2h5v-2zM1046 282v2h-5v-2zM777 303l4-2v4zM858 303l-4-2v4zM861 303l5-2v4zM986 303l-4-2v4zM704.500 344l-2 5h4zM704.500 580l-2-5h4zM741 344h2v5h-2zM741 465h2v11h-2zM741 542h2v5h-2zM864 543l-1 5-3-2zM1127 302v2h4v-2zM1172 302v2h11v-2zM1228 302v2h-4v-2z"/>
        </g>
        <g class="num">
          <text x="911" y="288">160</text><text x="818" y="309">50</text><text x="924" y="309">75</text>
          <text x="743" y="412">75</text><text x="706" y="468">140</text><text x="743" y="514">45</text>
          <text x="809" y="605">R8</text><text x="1152" y="307">30</text><text x="1203" y="307">30</text>
        </g>
        <g class="fmt"><text x="491" y="1001">TYPE : DRAFT</text><text x="612" y="1001">NAME : NONE</text><text x="731" y="1001">SIZE : C</text></g>
        <path d="M1279.500 350.500v16l4-3.500 3 6 2.500-1.500-3-5.500h5z" fill="#fff" stroke="#1b1b2b"/>
      </svg>
      <div class="viewbar">
        <button aria-label="Refit"><svg class="i"><use href="#zfit"/></svg></button>
        <button aria-label="Zoom in"><svg class="i"><use href="#zin"/></svg></button>
        <button aria-label="Zoom out"><svg class="i"><use href="#zout"/></svg></button>
        <button aria-label="Repaint"><svg class="i"><use href="#repaint"/></svg></button>
        <button class="drop" aria-label="Display style"><svg class="i"><use href="#shade"/></svg></button>
        <button class="drop" aria-label="Saved orientations"><svg class="i"><use href="#saved"/></svg></button>
        <button class="drop" aria-label="Datum display"><svg class="i"><use href="#datum"/></svg></button>
      </div>
    </div>
    <div class="sheets">
      <div class="sheetnav">
        <button aria-label="First sheet"><svg class="i"><use href="#first"/></svg></button>
        <button aria-label="Previous sheet"><svg class="i"><use href="#prev"/></svg></button>
        <button aria-label="Next sheet"><svg class="i"><use href="#next"/></svg></button>
        <button aria-label="Last sheet"><svg class="i"><use href="#last"/></svg></button>
        <button class="add" aria-label="Add sheet">+</button>
      </div>
      <button class="sheettab">Sheet 1</button>
      <div class="sheetfill"></div>
    </div>
  </div>
</main>

<footer class="status">
  <button class="sb boxed" aria-label="Navigator"><svg class="i"><use href="#nav"/></svg></button>
  <button class="sb" aria-label="Browser"><svg class="i"><use href="#globe"/></svg></button>
  <button class="sb" aria-label="Full screen"><svg class="i"><use href="#blank"/></svg></button>
  <p class="msg">Shaded model will be displayed</p>
  <div class="lights"><i class="go"></i><i></i><i></i></div>
  <div class="find"><button aria-label="Find"><svg class="i"><use href="#binoc"/></svg></button><button aria-label="Find options"><svg class="caret"><use href="#down"/></svg></button></div>
  <div class="pick"><select aria-label="Selection filter"><option>General</option></select><svg class="caret"><use href="#down"/></svg></div>
</footer>
</body>
</html>
```
FILE: styles.css
```css
* { box-sizing: border-box; }
body {
  margin: 0;
  height: 100vh;
  display: flex;
  flex-direction: column;
  overflow: hidden;
  background: #f8fafb;
  color: #43474a;
  font: 14px/20px "Noto Sans", "Open Sans", sans-serif;
}
button, select {
  margin: 0;
  padding: 0;
  border: 0;
  background: none;
  color: inherit;
  font: inherit;
}
button { display: flex; align-items: center; justify-content: center; white-space: nowrap; }
svg { display: block; flex: none; }
.defs { position: absolute; width: 0; height: 0; }
.i { width: 20px; height: 20px; }
.b { width: 40px; height: 40px; overflow: visible; }
.caret { width: 8px; height: 6px; }

/* title bar */
.titlebar {
  display: grid;
  grid-template-columns: 1fr auto 1fr;
  align-items: center;
  height: 34px;
  background: #dae1e0;
}
.titlebar h1 { margin: 0; font-size: 16px; font-weight: 400; color: #adb5b4; }
.quick {
  display: grid;
  grid-template-columns: 102px 30px 28px 34px 24px 22px 28px 17px 47px 28px 32px 16px 31px 30px;
  height: 30px;
}
.brand { display: flex; align-items: center; padding-left: 9px; font: 24px/24px Lato, sans-serif; color: #4a5053; }
.brand span { padding: 0 1px 4px 4px; }
.brand-dot { width: 4px; height: 4px; margin-bottom: 6px; border-radius: 50%; background: #4a5053; }
.split, .find { display: flex; border: 1px solid #a3a9a9; }
.split button:first-child { flex: 1; }
.split button:last-child { width: 17px; border-left: 1px solid #a3a9a9; }
.customize { border-left: 1px solid #a3a9a9; }
.winbtns { display: flex; justify-content: flex-end; gap: 13px; padding-right: 10px; }

/* ribbon tabs */
.tabs { display: flex; height: 35px; background: #3d4648; color: #f1f3f3; font-size: 16px; }
.tab { padding: 0 29px 0 28px; }
.tab.file { width: 75px; padding: 0; background: linear-gradient(160deg, #62ca42, #4ba631); }
.tab.active { background: #f8fafb; color: #3f8a2a; }
.tabtools { display: flex; align-items: center; gap: 9px; margin-left: auto; padding: 0 6px 4px 0; }
.tabtools .narrow { width: 8px; }
.help { width: 18px; margin-left: 2px; font-weight: 700; }

/* ribbon */
.ribbon { display: flex; height: 136px; border-bottom: 1px solid #b3b9b9; padding: 2px 0 3px; }
.group { display: flex; flex-direction: column; border-right: 1px solid #b6babc; }
.body { display: grid; grid-auto-flow: column; height: 102px; }
.caption { display: flex; flex: 1; align-items: center; justify-content: center; gap: 5px; padding-top: 5px; }
.col { display: grid; grid-template-rows: repeat(3, 34px); }
.col button { justify-content: flex-start; gap: 5px; padding-bottom: 3px; }
.big { flex-direction: column; justify-content: flex-start; gap: 12px; height: 101px; padding-top: 5px; }
.big.on { margin-left: 3px; padding-top: 4px; border: 1px solid #b3b7b9; background: #e0e2e3; }
.ribbon button:disabled { color: #abafb1; }
.g-doc { width: 263px; }
.g-doc .body { grid-template-columns: 84px 1fr; }
.g-doc .col { padding-left: 5px; }
.g-ins { width: 95px; }
.g-ins .body { grid-template-columns: 64px 1fr; }
.g-ins .col { padding-left: 2px; }
.g-mod { width: 570px; }
.g-mod .body { grid-template-columns: 72px 56px 92px 138px 1fr; }
.g-mod .col { padding-left: 4px; }
.g-edit { width: 360px; }
.g-edit .body { grid-template-columns: 166px 1fr; }
.g-edit .col, .g-disp .col { padding-left: 8px; }
.g-disp { width: 187px; }
.g-form { width: 277px; }
.g-form .body { grid-template-columns: 54px 48px 1fr; }
.g-form .col { margin-left: 4px; padding-left: 8px; }
.g-form .col .caret { margin-left: 5px; }
.ruled { border-left: 1px solid #b6babc; }

/* side panes */
.work { display: flex; flex: 1; min-height: 0; }
.side { display: grid; grid-template-rows: 32px 396px 3px 1fr; width: 348px; flex: none; border-right: 3px solid #dddfdf; }
.sidetabs { display: flex; margin-right: -3px; background: #d9e0de; }
.sidetabs button { width: 37px; }
.sidetabs .on { width: 39px; background: #f8fafb; }
.sidetabs button:last-child { margin-left: 2px; }
.side hr { width: 329px; height: 3px; margin: 0 6px 0 10px; border: 0; background: #dcdfde; }
.tools { display: flex; align-items: center; height: 30px; margin: 5px 9px 0 11px; }
.tri { width: 12px; height: 9px; }
.dots { width: 4px; height: 20px; margin-left: 7px; }
.w20 { width: 20px; }
.w24 { width: 24px; }
.w30 { width: 30px; }
.w40 { width: 40px; }
.push { margin-left: 23px; }
.end { width: 20px; margin-left: auto; }
.dark { color: #4b5052; }
.rule { width: 1px; height: 30px; margin-left: 5px; background: #b0b5b6; }
.rule.flush { margin-left: 0; }
.rule.wide { margin-left: 10px; }
.boxed { height: 30px; border: 1px solid #b0b4b6; background: #dfe1e2; }
.drop { position: relative; }
.drop::after {
  content: "";
  position: absolute;
  right: -1px;
  bottom: -2px;
  border: 2px solid #63686b;
  border-top-color: transparent;
  border-left-color: transparent;
}
.node { display: flex; align-items: center; gap: 6px; padding: 8px 13px; font-size: 12px; }
.node.bare { padding: 8px 15px; }

/* drawing area */
.stage { display: flex; flex: 1; flex-direction: column; min-width: 0; }
.canvas { position: relative; flex: 1; min-height: 0; background: #e8eaed; border-bottom: 1px solid #86898b; }
.drawing { width: 100%; height: 100%; }
.drawing path, .drawing rect { stroke-width: 1; }
.ln, .ext, .dim { fill: none; }
.ln { stroke: #000; }
.ext { stroke: #55585c; }
.dim { stroke: #1b60d2; }
.dim .tip { fill: #1b60d2; stroke: none; }
.num { fill: #1b60d2; font: 300 15px Roboto, sans-serif; text-anchor: middle; }
.fmt { fill: #989ba2; font: 15px "Liberation Sans", sans-serif; }
.viewbar {
  position: absolute;
  top: 7px;
  left: 50%;
  display: flex;
  gap: 12px;
  padding: 8px;
  border: 1px solid #a2a6a8;
  background: #f8fafb;
  transform: translateX(-50%);
}

/* sheet tabs */
.sheets { display: flex; height: 31px; padding-top: 4px; background: #f4f5f5; }
.sheetnav { display: flex; align-items: flex-start; border: 1px solid #86898b; border-right: 0; background: #dedfdf; }
.sheetnav button { width: 20px; height: 24px; }
.sheetnav button:first-child { margin-left: 3px; }
.sheetnav .add { width: 25px; height: 21px; margin-left: 8px; border: 1px solid #86898b; border-top: 0; font-size: 16px; font-weight: 600; }
.sheettab { width: 87px; margin-top: -4px; padding-top: 5px; border-bottom: 1px solid #86898b; font-weight: 700; }
.sheetfill { flex: 1; border: 1px solid #86898b; background: #dedfdf; }

/* status bar */
.status { display: flex; height: 42px; flex: none; padding: 6px 21px 5px 7px; border-top: 1px solid #b0b5b5; background: #f8faf9; }
.sb { width: 26px; height: 30px; margin-right: 4px; }
.msg { flex: 1; margin: 0 0 0 6px; padding: 4px 0 0 23px; border-left: 1px solid #b0b5b5; font-size: 12px; background: radial-gradient(circle at 10px 12px, #1c5f86 3px, transparent 4px); }
.lights { display: flex; align-items: center; justify-content: center; gap: 2px; width: 42px; border: solid #b0b5b5; border-width: 0 1px; }
.lights i { width: 7px; height: 7px; border-radius: 50%; background: #ced1d1; }
.lights .go { width: 13px; height: 13px; background: #4ad045; }
.find { width: 51px; margin-left: 2px; border-color: #b8bcbc; }
.find button:first-child { flex: 1; }
.find button:last-child { width: 17px; border-left: 1px solid #b8bcbc; }
.pick { position: relative; width: 217px; height: 28px; margin: 1px 0 0 122px; }
.pick select { width: 100%; height: 100%; padding: 1px 0 0 8px; border: 1px solid #aaaeb0; background: linear-gradient(#aaaeb0, #aaaeb0) right 19px top / 1px 100% no-repeat #fbfbfb; appearance: none; }
.pick .caret { position: absolute; right: 6px; top: 11px; pointer-events: none; }
```
